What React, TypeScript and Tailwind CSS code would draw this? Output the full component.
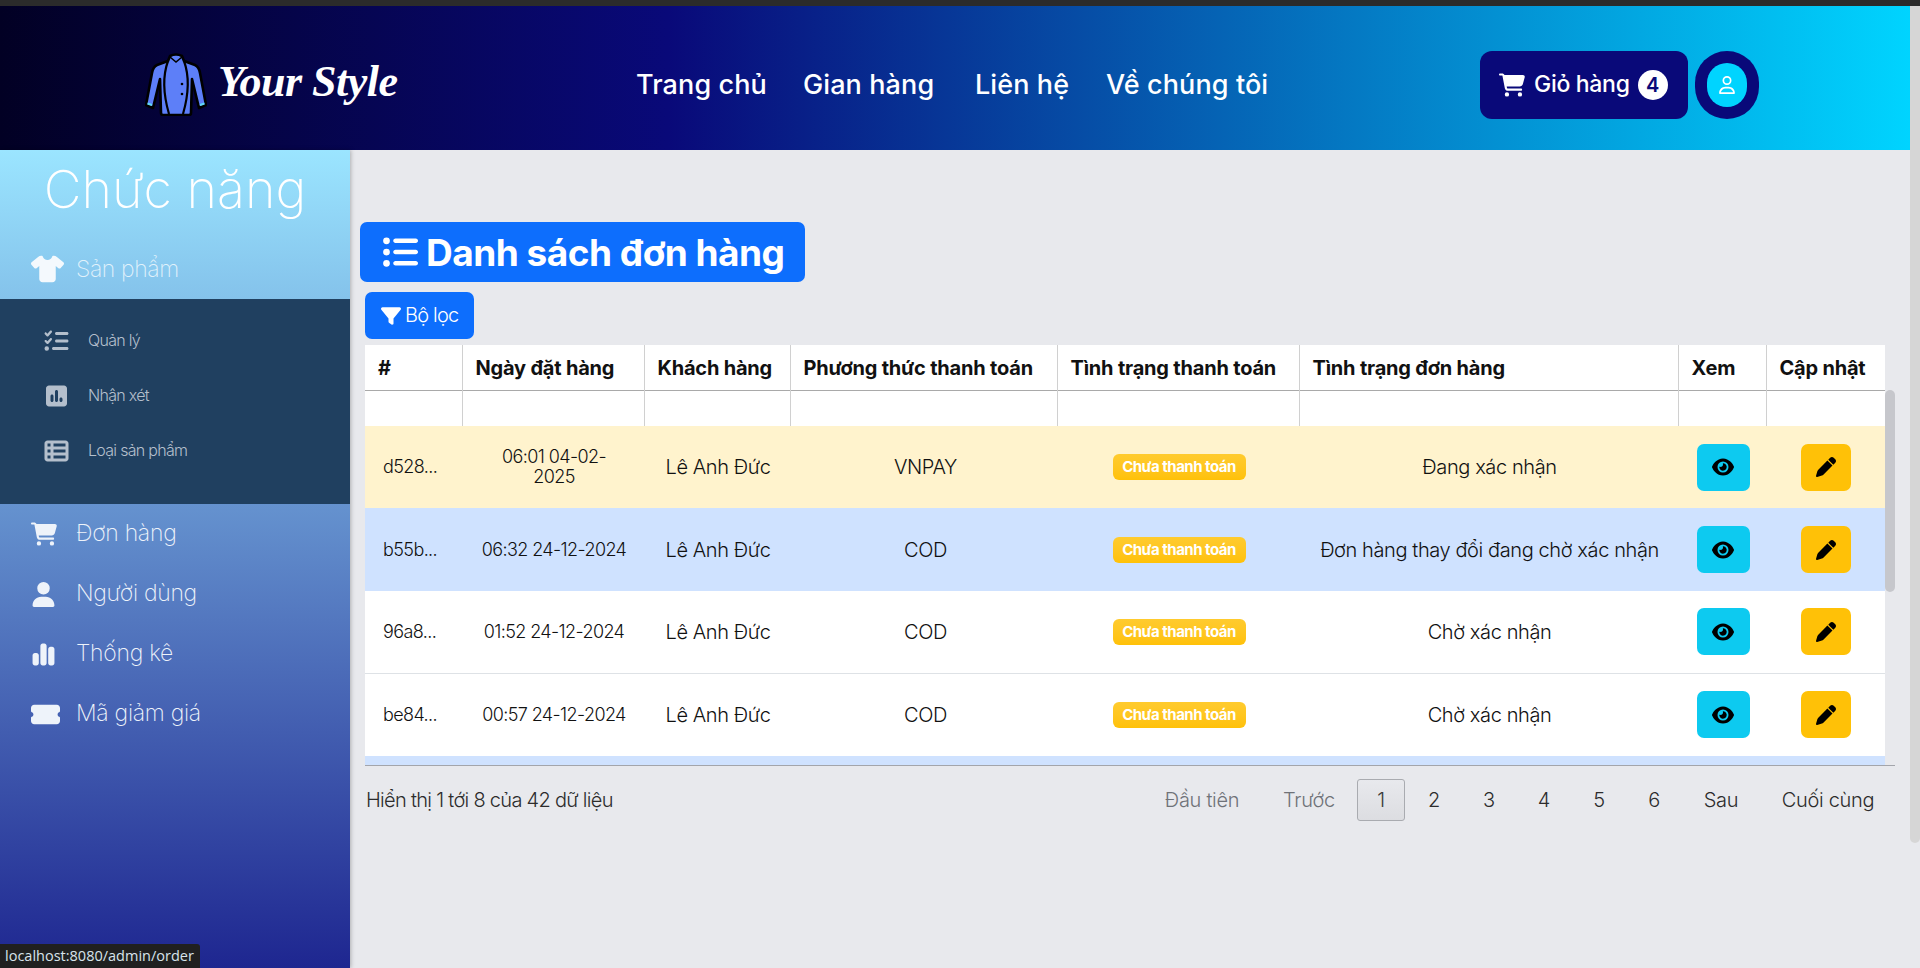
import {
  FaCartShopping,
  FaChartSimple,
  FaEye,
  FaFilter,
  FaListCheck,
  FaListUl,
  FaPen,
  FaRegUser,
  FaShirt,
  FaSquarePollVertical,
  FaTableList,
  FaTicketSimple,
  FaUser,
} from 'react-icons/fa6'

const navLinks = [
  { label: 'Trang chủ', className: 'w-[129px]' },
  { label: 'Gian hàng', className: 'w-[132px] ml-[38px]' },
  { label: 'Liên hệ', className: 'w-[93px] ml-[40px]' },
  { label: 'Về chúng tôi', className: 'w-[164px] ml-[38px]' },
]

const subMenu = [
  { label: 'Quản lý', icon: FaListCheck },
  { label: 'Nhận xét', icon: FaSquarePollVertical },
  { label: 'Loại sản phẩm', icon: FaTableList },
]

const mainMenu = [
  { label: 'Đơn hàng', icon: FaCartShopping, size: 'text-[26px]' },
  { label: 'Người dùng', icon: FaUser, size: 'text-[25px]' },
  { label: 'Thống kê', icon: FaChartSimple, size: 'text-[25px]' },
  { label: 'Mã giảm giá', icon: FaTicketSimple, size: 'text-[29px]' },
]

const columns = [
  { label: '#', width: 'w-[97px]' },
  { label: 'Ngày đặt hàng', width: 'w-[182px]' },
  { label: 'Khách hàng', width: 'w-[146px]' },
  { label: 'Phương thức thanh toán', width: 'w-[267px]' },
  { label: 'Tình trạng thanh toán', width: 'w-[242px]' },
  { label: 'Tình trạng đơn hàng', width: 'w-[379px]' },
  { label: 'Xem', width: 'w-[88px]' },
  { label: 'Cập nhật', width: 'w-[119px]' },
]

const orders = [
  { id: 'd528...', date: '06:01 04-02-\n2025', method: 'VNPAY', status: 'Đang xác nhận', row: 'bg-[#fff3cd] h-[82px]' },
  { id: 'b55b...', date: '06:32 24-12-2024', method: 'COD', status: 'Đơn hàng thay đổi đang chờ xác nhận', row: 'bg-[#cfe2ff] h-[83px]' },
  { id: '96a8...', date: '01:52 24-12-2024', method: 'COD', status: 'Chờ xác nhận', row: 'bg-white h-[82px] border-b border-[#dee2e6]' },
  { id: 'be84...', date: '00:57 24-12-2024', method: 'COD', status: 'Chờ xác nhận', row: 'bg-white h-[83px]' },
]

const pages = [
  { label: 'Đầu tiên', className: 'w-[118px] text-[#6f7278]' },
  { label: 'Trước', className: 'w-[82px] text-[#6f7278]' },
  { label: '1', className: 'w-12 -mr-[2px] border border-[#a9abb0] rounded-[3px] bg-gradient-to-b from-[#e8e9ed] to-[#dcdde1] text-[#3a3a3a]' },
  { label: '2', className: 'w-12' },
  { label: '3', className: 'w-12' },
  { label: '4', className: 'w-12' },
  { label: '5', className: 'w-12' },
  { label: '6', className: 'w-12' },
  { label: 'Sau', className: 'w-[72px]' },
  { label: 'Cuối cùng', className: 'w-[128px]' },
]

function CoatLogo() {
  return (
    <svg width="62" height="63" viewBox="0 0 62 63" className="shrink-0">
      <path
        d="M25 3 Q31 0 37 3 L39 8 L50 12 Q54 14 55 20 L61 52 L54 55 L47 26 L46 60 Q46 62 44 62 L18 62 Q16 62 16 60 L15 26 L8 55 L1 52 L7 20 Q8 14 12 12 L23 8 Z"
        fill="#5d7ff8"
        stroke="#000"
        strokeWidth="2.6"
        strokeLinejoin="round"
      />
      <path d="M23 8 Q15 30 24 61 M39 8 Q47 30 38 61" fill="none" stroke="#000" strokeWidth="2.2" />
      <path d="M25 4 L31 9 L37 4" fill="none" stroke="#000" strokeWidth="1.6" />
      <circle cx="37" cy="31" r="1.3" fill="#000" />
      <circle cx="37" cy="41" r="1.3" fill="#000" />
      <path d="M2.5 50.5 L7 52 M55 52 L59.5 50.5" stroke="#5fd8f5" strokeWidth="2" />
    </svg>
  )
}

function Header() {
  return (
    <header className="h-[144px] pt-[13px] flex items-center bg-[linear-gradient(90deg,#020024_0%,#090979_35%,#00d4ff_100%)]">
      <div className="w-[636px] pl-[145px] flex items-center">
        <CoatLogo />
        <span className="ml-[11px] -mt-[6px] font-[family-name:'Liberation_Serif',serif] italic font-bold text-[44px] leading-none tracking-[-0.5px] text-white whitespace-nowrap">
          Your Style
        </span>
      </div>
      <nav className="flex items-center mt-[1px]">
        {navLinks.map(link => (
          <a key={link.label} className={`${link.className} text-white text-[27px] font-medium tracking-[0.1px] whitespace-nowrap`}>
            {link.label}
          </a>
        ))}
      </nav>
      <div className="ml-[210px] flex items-center">
        <button className="w-[208px] h-[68px] rounded-[12px] bg-[#090979] text-white flex items-center pl-[19px]">
          <FaCartShopping className="text-[26px]" />
          <span className="ml-[9px] text-[23px] font-medium tracking-[-0.3px]">Giỏ hàng</span>
          <span className="ml-[8px] w-[30px] h-[30px] rounded-full bg-white text-[#090979] flex items-center justify-center text-[20px] font-semibold">
            4
          </span>
        </button>
        <div className="ml-[7px] w-[64px] h-[68px] rounded-full bg-[#090979] flex items-center justify-center">
          <div className="w-[40px] h-[44px] rounded-full bg-[#00d4ff] flex items-center justify-center text-white text-[18px]">
            <FaRegUser />
          </div>
        </div>
      </div>
    </header>
  )
}

function Sidebar() {
  return (
    <aside className="w-[350px] shrink-0 z-10 shadow-[1px_0_4px_rgba(0,0,0,0.25)] bg-[linear-gradient(180deg,#9be5ff_0%,#1e2690_100%)]">
      <h2 className="h-[88px] pt-[9px] text-center text-[52px] leading-[62px] font-extralight text-white">Chức năng</h2>
      <div className="h-[61px] pl-[31px] flex items-center text-white/75">
        <FaShirt className="text-[28px] text-[#f4f9fd] w-[33px]" />
        <span className="ml-[12px] mt-[2px] text-[23px] font-extralight tracking-[-0.4px]">Sản phẩm</span>
      </div>
      <div className="h-[205px] bg-[#204060] pt-[14px]">
        {subMenu.map(item => (
          <div key={item.label} className="h-[55px] pl-[44px] flex items-center text-[#b4bfcc]">
            <item.icon className="text-[24px] w-[25px]" />
            <span className="ml-[19px] -mt-[2px] text-[16px] font-light tracking-[-0.7px]">{item.label}</span>
          </div>
        ))}
      </div>
      <div>
        {mainMenu.map(item => (
          <div key={item.label} className="h-[60px] pl-[31px] flex items-center text-[#eef3fa]">
            <span className="w-[45px] shrink-0 flex">
              <item.icon className={item.size} />
            </span>
            <span className="-mt-[2px] text-[23px] font-extralight tracking-[-0.3px]">{item.label}</span>
          </div>
        ))}
      </div>
    </aside>
  )
}

function OrdersTable() {
  return (
    <div className="ml-[15px] mt-[6px] w-[1530px] flex border-b border-[#a3a5ab]">
      <div className="w-[1520px] h-[420px] overflow-hidden">
        <table className="w-[1520px] table-fixed border-collapse text-[#111]">
          <colgroup>
            {columns.map(c => (
              <col key={c.label} className={c.width} />
            ))}
          </colgroup>
          <thead>
            <tr className="h-[45px] bg-white border-b border-[#a9a9a9]">
              {columns.map((c, i) => (
                <th
                  key={c.label}
                  className={`pl-[13px] pt-[2px] text-left text-[20px] font-bold tracking-[-0.2px] whitespace-nowrap ${i < 7 ? 'border-r border-[#d0d0d0]' : ''}`}
                >
                  {c.label}
                </th>
              ))}
            </tr>
            <tr className="h-[36px] bg-white">
              {columns.map((c, i) => (
                <td key={c.label} className={i < 7 ? 'border-r border-[#d0d0d0]' : ''} />
              ))}
            </tr>
          </thead>
          <tbody>
            {orders.map(o => (
              <tr key={o.id} className={`${o.row} text-[20px] leading-[20px] font-light tracking-[-0.4px]`}>
                <td className="pl-[18px] text-[18px] tracking-[-0.6px]">{o.id}</td>
                <td className="pl-[2px] text-center whitespace-pre-line text-[18px] tracking-[-0.6px]">{o.date}</td>
                <td className="pl-[2px] text-center">Lê Anh Đức</td>
                <td className="pl-[4px] text-center">{o.method}</td>
                <td className="pl-[2px] text-center">
                  <span className="inline-block h-[26px] w-[133px] rounded-[6px] bg-gradient-to-b from-[#ffcb2e] to-[#ffc107] text-white text-[15px] leading-[26px] font-bold tracking-[-0.5px]">
                    Chưa thanh toán
                  </span>
                </td>
                <td className="pl-[2px] text-center">{o.status}</td>
                <td className="pl-[2px]">
                  <button className="block mx-auto w-[53px] h-[47px] rounded-[7px] bg-[#0dcaf0] flex items-center justify-center text-[22px] text-black">
                    <FaEye />
                  </button>
                </td>
                <td>
                  <button className="block ml-[35px] w-[50px] h-[47px] rounded-[7px] bg-[#ffc107] flex items-center justify-center text-[20px] text-black">
                    <FaPen />
                  </button>
                </td>
              </tr>
            ))}
            <tr className="h-[9px] bg-[#cfe2ff]">
              <td colSpan={8} />
            </tr>
          </tbody>
        </table>
      </div>
      <div className="w-[10px] pt-[45px]">
        <div className="h-[202px] rounded-[5px] bg-[#c6c7cc]" />
      </div>
    </div>
  )
}

function Pagination() {
  return (
    <div className="ml-[16px] mr-[18px] mt-[13px] flex items-center justify-between text-[20px] text-[#2c2c2c]">
      <span className="font-light tracking-[-0.7px]">Hiển thị 1 tới 8 của 42 dữ liệu</span>
      <div className="flex gap-[7px] font-light">
        {pages.map(p => (
          <a key={p.label} className={`${p.className} h-[42px] flex items-center justify-center tracking-[-0.3px]`}>
            {p.label}
          </a>
        ))}
      </div>
    </div>
  )
}

export default function App() {
  return (
    <div className="relative h-[968px] overflow-hidden flex flex-col bg-[#e8e9ed] font-[family-name:Inter,sans-serif]">
      <div className="h-[6px] shrink-0 bg-[#2b2b2b]" />
      <div className="flex flex-1 min-h-0">
        <div className="flex-1 min-w-0 flex flex-col">
          <Header />
          <div className="flex flex-1 min-h-0">
            <Sidebar />
            <main className="flex-1 min-w-0">
              <h1 className="ml-[10px] mt-[72px] w-[445px] h-[60px] rounded-[7px] bg-[#0d6efd] text-white flex items-center pl-[22px]">
                <FaListUl className="text-[36px]" />
                <span className="ml-[8px] mt-[2px] text-[37px] font-bold tracking-[-0.5px] whitespace-nowrap">Danh sách đơn hàng</span>
              </h1>
              <button className="ml-[15px] mt-[10px] w-[109px] h-[47px] rounded-[7px] bg-[#0d6efd] text-white flex items-center pl-[16px]">
                <FaFilter className="text-[20px]" />
                <span className="ml-[4px] -mt-[2px] text-[20px] font-light tracking-[-0.8px]">Bộ lọc</span>
              </button>
              <OrdersTable />
              <Pagination />
            </main>
          </div>
        </div>
        <div className="w-[10px] shrink-0">
          <div className="h-[837px] rounded-b-[5px] bg-[#d6d6d6]" />
        </div>
      </div>
      <div className="absolute z-20 left-0 bottom-0 w-[200px] h-[24px] rounded-tr-[3px] bg-[#202020] pl-[5px] text-[14.5px] leading-[24px] text-[#d8e4ec] font-[family-name:'Open_Sans',sans-serif] whitespace-nowrap">
        localhost:8080/admin/order
      </div>
    </div>
  )
}
